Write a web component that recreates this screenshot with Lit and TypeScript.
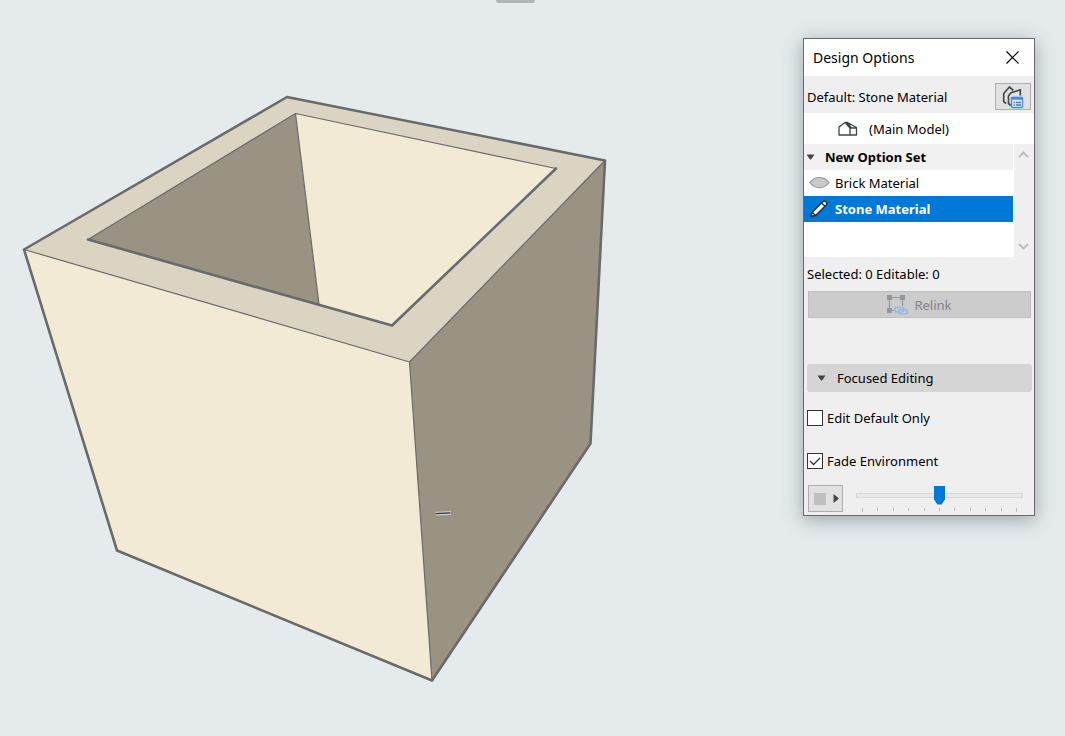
import { LitElement, html, css, svg } from "lit";
import { customElement, state } from "lit/decorators.js";

@customElement("model-view")
class ModelView extends LitElement {
  static styles = css`
    :host { display: block; width: 100%; height: 100%; }
    svg { display: block; width: 100%; height: 100%; }
    .thin { fill: none; stroke: #6a6a6a; stroke-width: 1.2; stroke-linejoin: round; }
    .thick { fill: none; stroke: #696a6b; stroke-width: 2.6; stroke-linejoin: round; stroke-linecap: round; }
  `;
  render() {
    return html`<svg viewBox="0 0 1065 736" preserveAspectRatio="xMinYMin meet" role="img" aria-label="Hollow stone box">
      ${svg`
        <path d="M24 249.500L287 97 605 160.500 409.500 362Z" fill="#dbd4c2"/>
        <path d="M24 249.500L409.500 362 432 680.500 117 550.500Z" fill="#f2ead5"/>
        <path d="M409.500 362L605 160.500 590.500 443.500 432 680.500Z" fill="#9a9384"/>
        <path d="M88 239.500L295.500 113.500 319 304.500Z" fill="#9a9384"/>
        <path d="M295.500 113.500L556 168.500 392 325.500 319 304.500Z" fill="#f2ead5"/>
        <path class="thin" d="M24 249.500L409.500 362 605 160.500M409.500 362L432 680.500M88 239.500L295.500 113.500 556 168.500M295.500 113.500L319 304.500"/>
        <path class="thick" d="M24 249.500L287 97 605 160.500 590.500 443.500 432 680.500 117 550.500Z"/>
        <path class="thick" d="M88 239.500L392 325.500 556 168.500"/>
        <path d="M435.500 511.700L451 511V515L435.500 515.500Z" fill="#cbc9c2"/>
        <path d="M435.500 513.600L450.500 512.900" stroke="#34383a" stroke-width="1.100"/>
      `}
    </svg>`;
  }
}

@customElement("design-options")
class DesignOptions extends LitElement {
  @state() selected = "Stone Material";
  @state() expanded = true;
  @state() editDefault = false;
  @state() fade = true;

  static styles = css`
    :host {
      display: block; box-sizing: border-box; width: 232px;
      border: 1px solid #666a6d; background: #efefef; color: #000;
      box-shadow: 0 4px 18px rgba(50, 70, 75, 0.42);
      font: 13px/20px "Noto Sans", "Open Sans", sans-serif;
    }
    * { box-sizing: border-box; }
    svg { display: block; flex: none; }
    button { font: inherit; color: inherit; border: 0; margin: 0; padding: 0; background: none; text-align: left; }
    .title { display: flex; align-items: center; justify-content: space-between; height: 37px; padding: 0 15px 0 9px; background: #fff; }
    h1 { margin: 0; font-size: 14px; line-height: 20px; font-weight: 400; }
    .default { display: flex; align-items: center; justify-content: space-between; height: 37px; padding: 4px 3px 0; }
    .tool { display: flex; align-items: center; justify-content: center; border: 1px solid #adadad; background: #e1e1e1; }
    .settings { width: 36px; height: 27px; }
    .main { display: flex; align-items: center; gap: 11px; width: 100%; height: 31px; padding-left: 34px; background: #fff; }
    .list { display: flex; height: 113px; background: #fff; }
    .rows { flex: 1; }
    .row { display: flex; align-items: center; gap: 5px; width: 100%; height: 26px; padding-left: 5px; }
    .group { gap: 10px; padding-left: 2px; font-weight: 700; background: #f1f1f1; }
    .selected { background: #0078d7; color: #fff; font-weight: 700; }
    .scroll { display: flex; flex-direction: column; justify-content: space-between; width: 20px; margin-left: 1px; padding: 5px 4px; background: #f0f0f0; }
    .body { padding: 7px 2px 3px 3px; }
    .count { margin: 0; }
    .relink { display: flex; align-items: center; justify-content: center; gap: 6px; width: calc(100% - 2px); height: 27px; margin: 7px 1px 0; border: 1px solid #bfbfbf; background: #ccc; color: #838383; }
    .section { display: flex; align-items: center; gap: 11px; width: 100%; height: 28px; margin-top: 46px; padding-left: 10px; border-radius: 3px; background: #d5d5d5; }
    .check { display: flex; align-items: center; gap: 4px; height: 20px; margin-top: 16px; }
    .check + .check { margin-top: 23px; }
    input[type="checkbox"] { appearance: none; width: 16px; height: 16px; margin: 0; border: 1px solid #333; background: #fff; }
    input[type="checkbox"]:checked { background: #fff url("data:image/svg+xml,%3Csvg xmlns='http://www.w3.org/2000/svg' viewBox='0 0 14 14'%3E%3Cpath d='M2 7l3.500 3.500L12 4' fill='none' stroke='%23333' stroke-width='1.300'/%3E%3C/svg%3E"); }
    .fade { display: flex; align-items: flex-start; gap: 13px; margin-top: 14px; padding-left: 1px; padding-right: 9px; }
    .swatch { width: 35px; height: 27px; gap: 7px; padding-left: 2px; }
    .slider { flex: 1; min-width: 0; }
    input[type="range"] { appearance: none; display: block; width: 100%; height: 20px; margin: 0; background: none; }
    input[type="range"]::-webkit-slider-runnable-track { height: 5px; border: 1px solid #d6d6d6; background: #e7eaea; }
    input[type="range"]::-webkit-slider-thumb { appearance: none; width: 11px; height: 19px; margin-top: -8px; background: #0078d7; clip-path: polygon(0 0, 100% 0, 100% 72%, 70% 100%, 30% 100%, 0 72%); }
    .ticks { display: flex; justify-content: space-between; padding: 0 6px; margin-top: 3px; }
    .ticks i { width: 1px; height: 3px; background: #bbb; }
    .ticks i:first-child, .ticks i:last-child { height: 4px; }
  `;

  render() {
    return html`
      <header class="title">
        <h1>Design Options</h1>
        <button aria-label="Close"><svg width="13" height="13" viewBox="0 0 13 13"><path d="M.5 .5l12 12M12.500 .5l-12 12" fill="none" stroke="#000" stroke-width="1.200"/></svg></button>
      </header>
      <div class="default">
        <span>Default: Stone Material</span>
        <button class="tool settings" aria-label="Option settings">
          <svg width="22" height="24" viewBox="0 0 22 24">
            <path d="M4 18.500L1.700 16.500V8.500L7.500 2L11.300 5.500M9 20.500L6.500 18.500V10.800L9 7.700L18.300 4.800V10.500" fill="none" stroke="#444b50" stroke-width="1.700"/>
            <rect x="9.500" y="12.500" width="11" height="10" rx="1" fill="#dcebff" stroke="#3e8af0" stroke-width="1.300"/>
            <path d="M9 13.300H21" stroke="#3e8af0" stroke-width="2.800"/>
            <path d="M11.500 17.500H13M11.500 20H13" stroke="#3e8af0" stroke-width="1.300"/><path d="M14 17.500H19M14 20H19" stroke="#63758b" stroke-width="1.300"/>
          </svg>
        </button>
      </div>
      <button class="main">
        <svg width="20" height="16" viewBox="0 0 20 16"><path d="M1 14V6L7 1.500L12 7V14ZM7 1.500H9.500L18.500 6.500V14H12M12 7H18M9 1.500L13.500 7" fill="none" stroke="#3c4448" stroke-width="1.300" stroke-linejoin="round"/></svg>
        <span>(Main Model)</span>
      </button>
      <div class="list">
        <div class="rows">
          <button class="row group"><svg width="9" height="6" viewBox="0 0 9 6"><path d="M.5 .5H8.500L5 5.500H4Z" fill="#444"/></svg><span>New Option Set</span></button>
          ${["Brick Material", "Stone Material"].map(name => html`
            <button class="row ${this.selected === name ? "selected" : ""}" aria-pressed=${this.selected === name} @click=${() => (this.selected = name)}>
              ${this.selected === name
                ? html`<svg width="21" height="20" viewBox="0 0 21 20"><path d="M2 17.500L3.200 13.200L13.800 2.700Q15.200 1.300 16.500 2.500L17.300 3.300Q18.400 4.600 17.200 6L6.600 16.500Z" fill="#fff" stroke="#26333f" stroke-width="1.500" stroke-linejoin="round"/><path d="M12.500 4L16 7.300M3.200 13.200L6.600 16.500" stroke="#26333f" stroke-width="1.500"/><path d="M2 17.500L2.500 15.500L4.200 17Z" fill="#26333f"/></svg>`
                : html`<svg width="21" height="20" viewBox="0 0 21 20"><path d="M.8 9.500Q4.500 4.500 10.500 4.500Q16.500 4.500 20 9.500Q16.500 14.700 10.500 14.700Q4.500 14.700 .8 9.500Z" fill="#c9c9c9" stroke="#969a9c" stroke-width="1.200"/></svg>`}
              <span>${name}</span>
            </button>`)}
        </div>
        <div class="scroll">
          <button aria-label="Scroll up"><svg width="11" height="10" viewBox="0 0 11 10"><path d="M1 8L5.500 3.500L10 8" fill="none" stroke="#bbb" stroke-width="1.800"/></svg></button>
          <button aria-label="Scroll down"><svg width="11" height="10" viewBox="0 0 11 10"><path d="M1 2L5.500 6.500L10 2" fill="none" stroke="#bbb" stroke-width="1.800"/></svg></button>
        </div>
      </div>
      <div class="body">
        <p class="count">Selected: 0 Editable: 0</p>
        <button class="relink" disabled>
          <svg width="21" height="20" viewBox="0 0 21 20">
            <path d="M2.500 2.500H15.500V11M2.500 2.500V15.500H7" fill="none" stroke="#929698" stroke-width="1.200"/>
            <path d="M0 0H5V5H0ZM13 0H18V5H13ZM0 13H5V18H0Z" fill="#929698"/>
            <rect x="7.700" y="12.500" width="9" height="4.500" rx="1.500" fill="none" stroke="#9bb6e4" stroke-width="1.600"/>
            <rect x="11.700" y="14.800" width="8.500" height="4.200" rx="1.500" fill="none" stroke="#9bb6e4" stroke-width="1.600"/>
          </svg>
          <span>Relink</span>
        </button>
        <button class="section" aria-expanded=${this.expanded} @click=${() => (this.expanded = !this.expanded)}>
          <svg width="9" height="6" viewBox="0 0 9 6"><path d="M.5 .5H8.500L5 5.500H4Z" fill="#444"/></svg><span>Focused Editing</span>
        </button>
        ${this.expanded ? html`
          <label class="check"><input type="checkbox" .checked=${this.editDefault}><span>Edit Default Only</span></label>
          <label class="check"><input type="checkbox" .checked=${this.fade}><span>Fade Environment</span></label>
          <div class="fade">
            <button class="tool swatch" aria-label="Fade style">
              <svg width="12" height="12" viewBox="0 0 12 12"><rect width="12" height="12" fill="#bfbfbf"/></svg>
              <svg width="6" height="9" viewBox="0 0 6 9"><path d="M.5 0V9L5.500 5V4Z" fill="#444"/></svg>
            </button>
            <div class="slider">
              <input type="range" min="0" max="10" value="5" aria-label="Fade amount">
              <div class="ticks">${Array.from({ length: 11 }, () => html`<i></i>`)}</div>
            </div>
          </div>` : ""}
      </div>`;
  }
}

@customElement("app-root")
class AppRoot extends LitElement {
  static styles = css`
    :host { display: block; position: relative; height: 100vh; overflow: hidden; background: #e5ebed; }
    .handle { position: absolute; top: 0; left: 50%; width: 39px; height: 3px; margin-left: -37px; border-radius: 0 0 4px 4px; background: #b1b5b7; }
    .palette { position: absolute; top: 38px; right: 30px; }
  `;
  render() {
    return html`<model-view></model-view><div class="handle"></div><design-options class="palette"></design-options>`;
  }
}
